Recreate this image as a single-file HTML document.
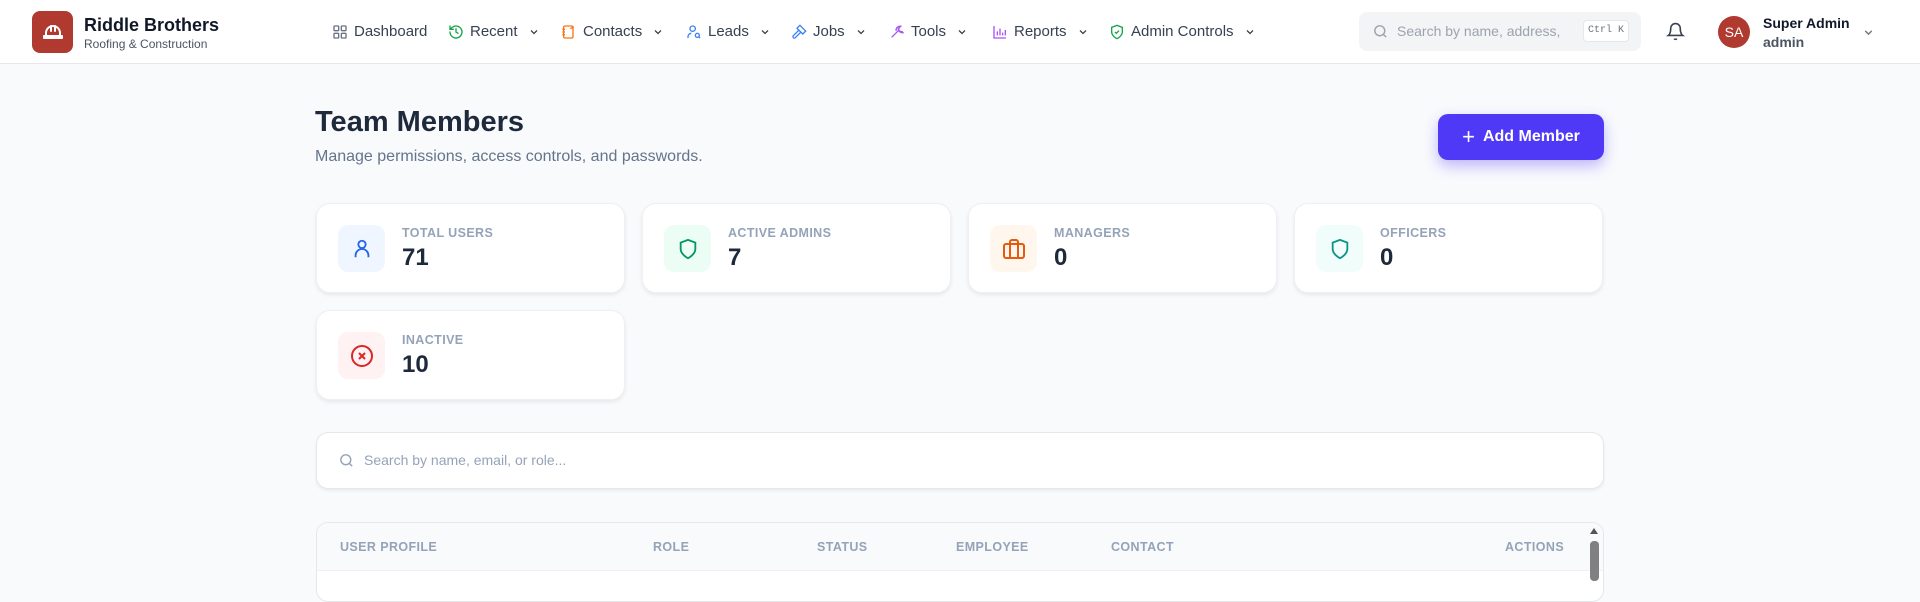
<!DOCTYPE html>
<html><head><meta charset="utf-8"><style>
*{box-sizing:border-box;margin:0;padding:0}
body{width:1920px;height:576px;overflow:hidden;background:#f8fafc;font-family:"Liberation Sans",sans-serif;color:#0f172a;position:relative}
.hdr{position:absolute;left:0;top:0;width:1920px;height:64px;background:#fff;border-bottom:1px solid #e5e7eb}
.abs{position:absolute}
.nav{position:absolute;top:23px;font-size:15px;color:#374151;display:flex;align-items:center;gap:6px;white-space:nowrap}
.nav svg{width:16px;height:16px}
.chev{width:12px!important;height:12px!important;margin-left:4px}
.card{position:absolute;background:#fff;border:1px solid #eef0f3;border-radius:14px;box-shadow:0 2px 4px rgba(15,23,42,.08);width:309px;height:90px}
.ib{position:absolute;left:21px;top:21px;width:47px;height:47px;border-radius:10px;display:flex;align-items:center;justify-content:center}
.lbl{position:absolute;left:85px;top:22px;font-size:12.5px;font-weight:bold;color:#94a3b8;letter-spacing:.4px}
.val{position:absolute;left:85px;top:40px;font-size:24px;font-weight:bold;color:#1e293b}
.th{position:absolute;top:540px;font-size:12.5px;font-weight:bold;color:#94a3b8;letter-spacing:.4px}
</style></head><body>
<div class="hdr">
 <div class="abs" style="left:32px;top:11px;width:41px;height:42px;background:#b03a30;border-radius:8px;display:flex;align-items:center;justify-content:center">
  <svg width="24" height="24" viewBox="0 0 24 24" fill="none" stroke="#fff" stroke-width="2" stroke-linecap="round" stroke-linejoin="round"><path d="M3 18h18v-2H3z"/><path d="M5 16v-3a7 7 0 0 1 14 0v3"/><path d="M10 6v5M14 6v5"/></svg>
 </div>
 <div class="abs" style="left:84px;top:15px;font-size:18px;font-weight:bold;color:#111827">Riddle Brothers</div>
 <div class="abs" style="left:84px;top:37px;font-size:12px;color:#4b5563">Roofing &amp; Construction</div>

 <div class="nav" style="left:332px"><svg viewBox="0 0 24 24" fill="none" stroke="#6b7280" stroke-width="2"><rect x="3" y="3" width="7" height="7" rx="1"/><rect x="14" y="3" width="7" height="7" rx="1"/><rect x="3" y="14" width="7" height="7" rx="1"/><rect x="14" y="14" width="7" height="7" rx="1"/></svg>Dashboard</div>
 <div class="nav" style="left:448px"><svg viewBox="0 0 24 24" fill="none" stroke="#16a34a" stroke-width="2" stroke-linecap="round"><path d="M3 12a9 9 0 1 0 3-6.7L3 8"/><path d="M3 3v5h5"/><path d="M12 7v5l3 2"/></svg>Recent<svg class="chev" viewBox="0 0 24 24" fill="none" stroke="#374151" stroke-width="2.5"><path d="M6 9l6 6 6-6"/></svg></div>
 <div class="nav" style="left:561px"><svg viewBox="0 0 24 24" fill="none" stroke="#f97316" stroke-width="2"><rect x="4" y="3" width="14" height="18" rx="2"/><path d="M2 8h4M2 12h4M2 16h4M14 7l5-3"/></svg>Contacts<svg class="chev" viewBox="0 0 24 24" fill="none" stroke="#374151" stroke-width="2.5"><path d="M6 9l6 6 6-6"/></svg></div>
 <div class="nav" style="left:686px"><svg viewBox="0 0 24 24" fill="none" stroke="#3b82f6" stroke-width="2"><circle cx="10" cy="7" r="4"/><path d="M3 21v-2a5 5 0 0 1 5-5"/><circle cx="17" cy="17" r="3"/><path d="M19 19l2 2"/></svg>Leads<svg class="chev" viewBox="0 0 24 24" fill="none" stroke="#374151" stroke-width="2.5"><path d="M6 9l6 6 6-6"/></svg></div>
 <div class="nav" style="left:791px"><svg viewBox="0 0 24 24" fill="none" stroke="#3b82f6" stroke-width="2"><path d="M15 12l-8.5 8.5a2 2 0 0 1-3-3L12 9"/><path d="M17.6 15L22 10.6 13.4 2 9 6.4z"/></svg>Jobs<svg class="chev" viewBox="0 0 24 24" fill="none" stroke="#374151" stroke-width="2.5"><path d="M6 9l6 6 6-6"/></svg></div>
 <div class="nav" style="left:889px"><svg viewBox="0 0 24 24" fill="none" stroke="#a855f7" stroke-width="2"><path d="M14.7 6.3a4 4 0 0 0 5 5L21 13a6 6 0 0 1-7-7zM14 10L4 20"/><path d="M14.7 6.3l3-3a6 6 0 0 0-7 7"/></svg>Tools<svg class="chev" viewBox="0 0 24 24" fill="none" stroke="#374151" stroke-width="2.5"><path d="M6 9l6 6 6-6"/></svg></div>
 <div class="nav" style="left:992px"><svg viewBox="0 0 24 24" fill="none" stroke="#a855f7" stroke-width="2"><path d="M3 3v18h18M8 17V11M12 17V7M16 17v-4M20 17V9"/></svg>Reports<svg class="chev" viewBox="0 0 24 24" fill="none" stroke="#374151" stroke-width="2.5"><path d="M6 9l6 6 6-6"/></svg></div>
 <div class="nav" style="left:1109px"><svg viewBox="0 0 24 24" fill="none" stroke="#16a34a" stroke-width="2"><path d="M12 22s8-4 8-10V5l-8-3-8 3v7c0 6 8 10 8 10z"/><path d="M9 12l2 2 4-4"/></svg>Admin Controls<svg class="chev" viewBox="0 0 24 24" fill="none" stroke="#374151" stroke-width="2.5"><path d="M6 9l6 6 6-6"/></svg></div>

 <div class="abs" style="left:1359px;top:12px;width:282px;height:39px;background:#f3f4f6;border-radius:8px">
  <svg class="abs" style="left:13px;top:11px" width="17" height="17" viewBox="0 0 24 24" fill="none" stroke="#9ca3af" stroke-width="2"><circle cx="11" cy="11" r="7"/><path d="M20 20l-4-4"/></svg>
  <div class="abs" style="left:38px;top:11px;font-size:14px;color:#9ca3af">Search by name, address,</div>
  <div class="abs" style="left:224px;top:8px;width:46px;height:22px;background:#fff;border:1px solid #e5e7eb;border-radius:4px;font-family:'Liberation Mono',monospace;font-size:10px;color:#6b7280;text-align:center;line-height:20px">Ctrl K</div>
 </div>
 <svg class="abs" style="left:1666px;top:21px" width="19" height="21" viewBox="0 0 24 24" fill="none" stroke="#374151" stroke-width="2"><path d="M6 8a6 6 0 0 1 12 0c0 7 3 9 3 9H3s3-2 3-9"/><path d="M10.3 21a2 2 0 0 0 3.4 0"/></svg>
 <div class="abs" style="left:1718px;top:16px;width:32px;height:32px;border-radius:50%;background:#b03a30;color:#fff;font-size:14px;text-align:center;line-height:32px">SA</div>
 <div class="abs" style="left:1763px;top:15px;font-size:14px;font-weight:bold;color:#111827">Super Admin</div>
 <div class="abs" style="left:1763px;top:34px;font-size:14px;font-weight:bold;color:#4b5563">admin</div>
 <svg class="abs" style="left:1862px;top:26px" width="13" height="13" viewBox="0 0 24 24" fill="none" stroke="#6b7280" stroke-width="2.5"><path d="M6 9l6 6 6-6"/></svg>
</div>

<div class="abs" style="left:315px;top:106px;font-size:29px;font-weight:bold;color:#1e293b">Team Members</div>
<div class="abs" style="left:315px;top:148px;font-size:16px;color:#64748b">Manage permissions, access controls, and passwords.</div>
<div class="abs" style="left:1438px;top:114px;width:166px;height:46px;background:#4f39f6;border-radius:10px;box-shadow:0 6px 14px rgba(79,57,246,.35);color:#fff;font-size:16px;font-weight:bold;display:flex;align-items:center;justify-content:center;gap:8px"><span style="font-size:22px;font-weight:normal;line-height:1">+</span>Add Member</div>

<div class="card" style="left:316px;top:203px"><div class="ib" style="background:#eff6ff"><svg width="22" height="22" viewBox="0 0 24 24" fill="none" stroke="#2563eb" stroke-width="2"><circle cx="12" cy="7" r="4"/><path d="M5 21v-2a7 7 0 0 1 14 0v2"/></svg></div><div class="lbl">TOTAL USERS</div><div class="val">71</div></div>
<div class="card" style="left:642px;top:203px"><div class="ib" style="background:#ecfdf5"><svg width="22" height="22" viewBox="0 0 24 24" fill="none" stroke="#059669" stroke-width="2"><path d="M12 22s8-4 8-10V5l-8-3-8 3v7c0 6 8 10 8 10z"/></svg></div><div class="lbl">ACTIVE ADMINS</div><div class="val">7</div></div>
<div class="card" style="left:968px;top:203px"><div class="ib" style="background:#fff7ed"><svg width="24" height="24" viewBox="0 0 24 24" fill="none" stroke="#ea580c" stroke-width="2"><rect x="2" y="7" width="20" height="14" rx="2"/><path d="M16 21V5a2 2 0 0 0-2-2h-4a2 2 0 0 0-2 2v16"/></svg></div><div class="lbl">MANAGERS</div><div class="val">0</div></div>
<div class="card" style="left:1294px;top:203px"><div class="ib" style="background:#f0fdfa"><svg width="22" height="22" viewBox="0 0 24 24" fill="none" stroke="#0d9488" stroke-width="2"><path d="M12 22s8-4 8-10V5l-8-3-8 3v7c0 6 8 10 8 10z"/></svg></div><div class="lbl">OFFICERS</div><div class="val">0</div></div>
<div class="card" style="left:316px;top:310px"><div class="ib" style="background:#fef2f2"><svg width="24" height="24" viewBox="0 0 24 24" fill="none" stroke="#dc2626" stroke-width="2"><circle cx="12" cy="12" r="10"/><path d="M15 9l-6 6M9 9l6 6"/></svg></div><div class="lbl">INACTIVE</div><div class="val">10</div></div>

<div class="abs" style="left:316px;top:432px;width:1288px;height:57px;background:#fff;border:1px solid #e5e7eb;border-radius:12px;box-shadow:0 2px 3px rgba(15,23,42,.06)">
 <svg class="abs" style="left:21px;top:19px" width="17" height="17" viewBox="0 0 24 24" fill="none" stroke="#94a3b8" stroke-width="2"><circle cx="11" cy="11" r="7"/><path d="M20 20l-4-4"/></svg>
 <div class="abs" style="left:47px;top:19px;font-size:14px;color:#94a3b8">Search by name, email, or role...</div>
</div>

<div class="abs" style="left:316px;top:522px;width:1288px;height:80px;background:#fff;border:1px solid #e5e7eb;border-radius:12px"></div>
<div class="abs" style="left:317px;top:523px;width:1286px;height:48px;background:#f8fafc;border-bottom:1px solid #eef0f3;border-radius:12px 12px 0 0"></div>
<div class="th" style="left:340px">USER PROFILE</div>
<div class="th" style="left:653px">ROLE</div>
<div class="th" style="left:817px">STATUS</div>
<div class="th" style="left:956px">EMPLOYEE</div>
<div class="th" style="left:1111px">CONTACT</div>
<div class="th" style="left:1505px">ACTIONS</div>
<div class="abs" style="left:1590px;top:528px;width:0;height:0;border-left:4px solid transparent;border-right:4px solid transparent;border-bottom:6px solid #555"></div>
<div class="abs" style="left:1590px;top:541px;width:9px;height:40px;background:#808080;border-radius:4px"></div>
</body></html>
